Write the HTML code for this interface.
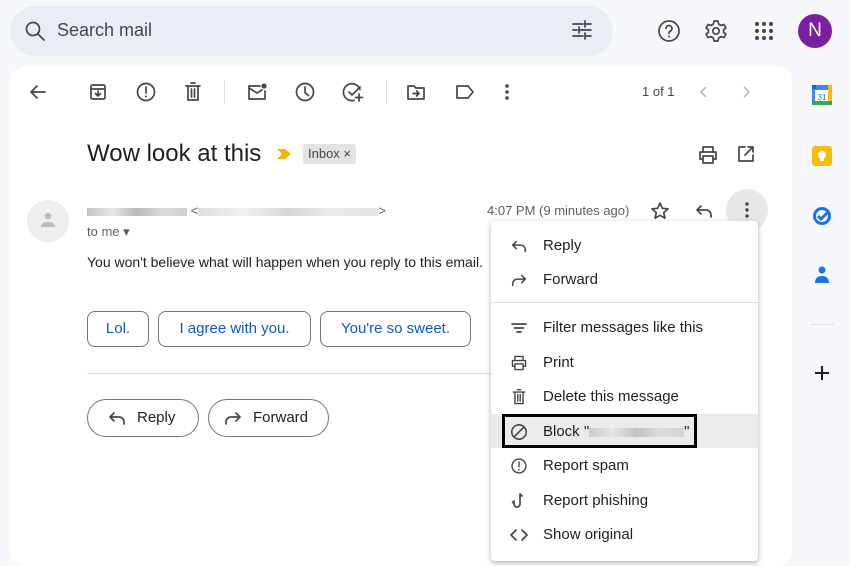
<!DOCTYPE html>
<html><head><style>
*{box-sizing:border-box;margin:0;padding:0}
body{width:850px;height:555px;overflow:hidden;background:#f6f8fc;font-family:"Liberation Sans",Arial,sans-serif;color:#1f1f1f;position:relative}
.abs{position:absolute}
svg{display:block}
.search{left:10px;top:6px;width:603px;height:50px;border-radius:25px;background:#e9eef6}
.card{left:10px;top:66px;width:782px;height:500px;background:#fff;border-radius:16px}
.ic{fill:none;stroke:#444746;stroke-width:1.7;stroke-linecap:round;stroke-linejoin:round}
.btn{position:absolute;height:36px;border:1px solid #747775;border-radius:8px;color:#0b57d0;font-size:15px;line-height:34px;text-align:center}
.pill{position:absolute;height:38px;border:1px solid #747775;border-radius:19px;font-size:15px;line-height:36px;color:#1f1f1f}
.menu{left:491px;top:221px;width:267px;height:340px;background:#fff;box-shadow:0 2px 6px rgba(0,0,0,.3);border-radius:4px}
.mi{position:absolute;left:0;width:267px;height:34px;font-size:15px;line-height:36px;padding-left:52px;color:#1f1f1f}
.mi svg{position:absolute;left:19px;top:9px}
.blur{display:inline-block;height:8px;background:linear-gradient(90deg,#aaa,#ddd,#999,#ccc,#bbb);vertical-align:middle;opacity:.7}
</style></head><body>
<div class="abs search"></div>
<svg class="abs" style="left:24px;top:20px" width="22" height="22" viewBox="0 0 22 22"><circle cx="9" cy="9" r="6.5" class="ic" stroke-width="2.2"/><path d="M14 14l6 6" class="ic" stroke-width="2.4"/></svg>
<div class="abs" style="left:57px;top:20px;font-size:18px;color:#444746">Search mail</div>
<svg class="abs" style="left:571px;top:20px" width="22" height="20" viewBox="0 0 22 20"><path d="M2 4h10M15 4h5M14 1v6M2 10h4M9 10h11M8 7v6M2 16h10M15 16h5M14 13v6" class="ic" stroke-linecap="butt"/></svg>
<svg class="abs" style="left:657px;top:19px" width="24" height="24" viewBox="0 0 24 24"><circle cx="12" cy="12" r="10" class="ic"/><path d="M9 9.5a3 3 0 1 1 4 2.8c-.8.4-1 1-1 2" class="ic"/><circle cx="12" cy="17.5" r="1" fill="#444746"/></svg>
<svg class="abs" style="left:704px;top:19px" width="24" height="24" viewBox="0 0 24 24"><circle cx="12" cy="12" r="3.2" class="ic"/><path d="M10 2h4l.6 3 2.4 1.4 2.9-1 2 3.4-2.3 2v2.4l2.3 2-2 3.4-2.9-1L14.6 19l-.6 3h-4l-.6-3L7 17.6l-2.9 1-2-3.4 2.3-2v-2.4l-2.3-2 2-3.4 2.9 1L9.4 5z" class="ic"/></svg>
<svg class="abs" style="left:754px;top:21px" width="20" height="20" viewBox="0 0 20 20" fill="#444746"><circle cx="3" cy="3" r="2"/><circle cx="10" cy="3" r="2"/><circle cx="17" cy="3" r="2"/><circle cx="3" cy="10" r="2"/><circle cx="10" cy="10" r="2"/><circle cx="17" cy="10" r="2"/><circle cx="3" cy="17" r="2"/><circle cx="10" cy="17" r="2"/><circle cx="17" cy="17" r="2"/></svg>
<div class="abs" style="left:798px;top:14px;width:34px;height:34px;border-radius:50%;background:#7b1fa2;color:#fff;font-size:19px;text-align:center;line-height:34px">N</div>

<div class="abs card"></div>
<svg class="abs" style="left:28px;top:82px" width="20" height="20" viewBox="0 0 20 20"><path d="M17 10H4M9 4l-6 6 6 6" class="ic"/></svg>
<svg class="abs" style="left:88px;top:82px" width="20" height="20" viewBox="0 0 20 20"><rect x="3" y="3" width="14" height="14" rx="1.5" class="ic"/><path d="M3 7h14M10 9v5M7.5 11.5 10 14l2.5-2.5" class="ic"/></svg>
<svg class="abs" style="left:135px;top:81px" width="22" height="22" viewBox="0 0 22 22"><circle cx="11" cy="11" r="8.5" class="ic"/><path d="M11 6v6" class="ic"/><circle cx="11" cy="15.5" r="1" fill="#444746"/></svg>
<svg class="abs" style="left:183px;top:81px" width="20" height="22" viewBox="0 0 20 22"><path d="M3 5h14M8 2h4M5 5v14h10V5M8.5 8v8M11.5 8v8" class="ic"/></svg>
<div class="abs" style="left:224px;top:80px;width:1px;height:24px;background:#e0e0e0"></div>
<svg class="abs" style="left:246px;top:81px" width="22" height="22" viewBox="0 0 22 22"><path d="M14 5H3v13h16V10" class="ic"/><path d="M3 7l8 5 5-3" class="ic"/><circle cx="18" cy="5" r="2.6" fill="#444746"/></svg>
<svg class="abs" style="left:294px;top:81px" width="22" height="22" viewBox="0 0 22 22"><circle cx="11" cy="11" r="8.5" class="ic"/><path d="M11 6v5.5l3.5 3" class="ic"/></svg>
<svg class="abs" style="left:342px;top:81px" width="22" height="22" viewBox="0 0 22 22"><path d="M18 8.5A8.5 8.5 0 1 0 12 19.4" class="ic"/><path d="M7 11l3 3 8-8M17 13v7M13.5 16.5h7" class="ic"/></svg>
<div class="abs" style="left:386px;top:80px;width:1px;height:24px;background:#e0e0e0"></div>
<svg class="abs" style="left:406px;top:82px" width="20" height="20" viewBox="0 0 20 20"><path d="M2 4h6l2 2h8v11H2z" class="ic"/><path d="M7 11.5h6M10.5 9l2.5 2.5-2.5 2.5" class="ic"/></svg>
<svg class="abs" style="left:454px;top:82px" width="22" height="20" viewBox="0 0 22 20"><path d="M3 4h11l5 6-5 6H3z" class="ic"/></svg>
<svg class="abs" style="left:503px;top:82px" width="8" height="20" viewBox="0 0 8 20" fill="#444746"><circle cx="4" cy="4" r="1.8"/><circle cx="4" cy="10" r="1.8"/><circle cx="4" cy="16" r="1.8"/></svg>
<div class="abs" style="left:642px;top:84px;font-size:13px;color:#444746">1 of 1</div>
<svg class="abs" style="left:698px;top:84px" width="12" height="16" viewBox="0 0 12 16"><path d="M8 3L3 8l5 5" style="fill:none;stroke:#b0b0b0;stroke-width:1.4"/></svg>
<svg class="abs" style="left:740px;top:84px" width="12" height="16" viewBox="0 0 12 16"><path d="M4 3l5 5-5 5" style="fill:none;stroke:#b0b0b0;stroke-width:1.4"/></svg>

<div class="abs" style="left:87px;top:140px;font-size:24px;color:#1f1f1f">Wow look at this</div>
<svg class="abs" style="left:276px;top:148px" width="16" height="12" viewBox="0 0 16 12"><path d="M1 1h8l6 5-6 5H1l5-5z" fill="#f4b400"/></svg>
<div class="abs" style="left:303px;top:144px;height:20px;padding:0 5px;background:#e3e3e3;border-radius:3px;font-size:13px;line-height:20px;color:#444746">Inbox ×</div>
<svg class="abs" style="left:697px;top:144px" width="22" height="22" viewBox="0 0 22 22"><path d="M6 8V3h10v5M6 15H3V8h16v7h-3M6 12h10v7H6z" class="ic"/></svg>
<svg class="abs" style="left:736px;top:144px" width="20" height="20" viewBox="0 0 20 20"><path d="M9 3H3v14h14v-6M12 3h5v5M17 3l-8 8" class="ic"/></svg>

<div class="abs" style="left:27px;top:200px;width:42px;height:42px;border-radius:50%;background:#eeeeee"></div>
<svg class="abs" style="left:38px;top:210px" width="20" height="20" viewBox="0 0 20 20" fill="#bdbdbd"><circle cx="10" cy="6" r="3.5"/><path d="M3 17c0-4 3-5 7-5s7 1 7 5z"/></svg>
<div class="abs" style="left:87px;top:203px;font-size:13px;color:#5e5e5e"><span class="blur" style="width:100px"></span> &lt;<span class="blur" style="width:180px;opacity:.4"></span>&gt;</div>
<div class="abs" style="left:87px;top:224px;font-size:13px;color:#5e5e5e">to me ▾</div>
<div class="abs" style="left:487px;top:203px;font-size:13px;color:#5e5e5e">4:07 PM (9 minutes ago)</div>
<svg class="abs" style="left:650px;top:201px" width="20" height="20" viewBox="0 0 20 20"><path d="M10 2l2.3 5.3 5.7.5-4.3 3.8 1.3 5.6L10 14.3 5 17.2l1.3-5.6L2 7.8l5.7-.5z" class="ic" stroke-width="1.6"/></svg>
<svg class="abs" style="left:694px;top:201px" width="20" height="20" viewBox="0 0 20 20"><path d="M7 5L3 9l4 4M3 9h9a5 5 0 0 1 5 5v2" class="ic"/></svg>
<div class="abs" style="left:726px;top:189px;width:42px;height:42px;border-radius:50%;background:#e8e8e8"></div>
<svg class="abs" style="left:743px;top:200px" width="8" height="20" viewBox="0 0 8 20" fill="#444746"><circle cx="4" cy="4" r="1.7"/><circle cx="4" cy="10" r="1.7"/><circle cx="4" cy="16" r="1.7"/></svg>
<div class="abs" style="left:87px;top:254px;font-size:14px;color:#1f1f1f">You won't believe what will happen when you reply to this email.</div>

<div class="btn" style="left:87px;top:311px;width:62px">Lol.</div>
<div class="btn" style="left:158px;top:311px;width:153px">I agree with you.</div>
<div class="btn" style="left:320px;top:311px;width:151px">You're so sweet.</div>
<div class="abs" style="left:87px;top:373px;width:405px;height:1px;background:#e0e0e0"></div>
<div class="pill" style="left:87px;top:399px;width:112px;padding-left:49px">Reply</div>
<svg class="abs" style="left:107px;top:408px" width="20" height="20" viewBox="0 0 20 20"><path d="M7 5L3 9l4 4M3 9h9a5 5 0 0 1 5 5v2" class="ic"/></svg>
<div class="pill" style="left:208px;top:399px;width:121px;padding-left:44px">Forward</div>
<svg class="abs" style="left:223px;top:408px" width="20" height="20" viewBox="0 0 20 20"><path d="M13 5l4 4-4 4M17 9H8a5 5 0 0 0-5 5v2" class="ic"/></svg>

<div class="abs menu">
<div class="mi" style="top:7px"><svg width="18" height="18" viewBox="0 0 20 20"><path d="M7 5L3 9l4 4M3 9h9a5 5 0 0 1 5 5v2" class="ic"/></svg>Reply</div>
<div class="mi" style="top:41px"><svg width="18" height="18" viewBox="0 0 20 20"><path d="M13 5l4 4-4 4M17 9H8a5 5 0 0 0-5 5v2" class="ic"/></svg>Forward</div>
<div style="position:absolute;left:0;top:81px;width:267px;height:1px;background:#e0e0e0"></div>
<div class="mi" style="top:89px"><svg width="18" height="18" viewBox="0 0 18 18"><path d="M2 5h14M4.5 9h9M7 13h4" class="ic"/></svg>Filter messages like this</div>
<div class="mi" style="top:124px"><svg width="18" height="18" viewBox="0 0 22 22"><path d="M6 8V3h10v5M6 15H3V8h16v7h-3M6 12h10v7H6z" class="ic"/></svg>Print</div>
<div class="mi" style="top:158px"><svg width="18" height="18" viewBox="0 0 20 22"><path d="M3 5h14M8 2h4M5 5v14h10V5M8.5 8v8M11.5 8v8" class="ic"/></svg>Delete this message</div>
<div class="mi" style="top:193px;background:#ebebeb"><svg width="18" height="18" viewBox="0 0 20 20"><circle cx="10" cy="10" r="8" class="ic"/><path d="M4.5 15.5l11-11" class="ic"/></svg>Block "<span class="blur" style="width:95px;height:9px;opacity:.5"></span>"</div>
<div style="position:absolute;left:11px;top:193px;width:195px;height:34px;border:3px solid #000"></div>
<div class="mi" style="top:227px"><svg width="18" height="18" viewBox="0 0 22 22"><circle cx="11" cy="11" r="8.5" class="ic"/><path d="M11 6v6" class="ic"/><circle cx="11" cy="15.5" r="1" fill="#444746"/></svg>Report spam</div>
<div class="mi" style="top:262px"><svg width="18" height="18" viewBox="0 0 18 18"><path d="M10 2v10a3 3 0 0 1-6 0v-3l-1.5 1.5M10 2l2 2" class="ic"/></svg>Report phishing</div>
<div class="mi" style="top:296px"><svg width="18" height="18" viewBox="0 0 18 18"><path d="M6 4L1 9l5 5M12 4l5 5-5 5" class="ic"/></svg>Show original</div>
</div>

<svg class="abs" style="left:811px;top:84px" width="22" height="22" viewBox="0 0 22 22"><rect x="1" y="1" width="20" height="20" rx="2" fill="#4285f4"/><rect x="4" y="6" width="14" height="12" fill="#fff"/><rect x="1" y="17" width="20" height="4" fill="#34a853"/><rect x="17" y="1" width="4" height="16" fill="#fbbc04"/><rect x="1" y="1" width="4" height="4" fill="#1967d2"/><text x="11" y="16" font-size="8" text-anchor="middle" fill="#1a73e8" font-family="Liberation Sans">31</text></svg>
<svg class="abs" style="left:811px;top:145px" width="22" height="22" viewBox="0 0 22 22"><rect x="1" y="1" width="20" height="20" rx="3" fill="#fbbc04"/><circle cx="11" cy="10" r="4" fill="#fff"/><rect x="9" y="14" width="4" height="2" fill="#fff"/></svg>
<svg class="abs" style="left:812px;top:206px" width="20" height="20" viewBox="0 0 20 20"><circle cx="10" cy="10" r="7.5" fill="none" stroke="#1a73e8" stroke-width="3"/><path d="M6 10l3 3 7-7" fill="none" stroke="#1a73e8" stroke-width="3"/></svg>
<svg class="abs" style="left:813px;top:265px" width="18" height="20" viewBox="0 0 18 20" fill="#1a73e8"><circle cx="9" cy="5" r="3.5"/><path d="M2 18c0-5 3-7 7-7s7 2 7 7z"/></svg>
<div class="abs" style="left:810px;top:324px;width:24px;height:1px;background:#e0e0e0"></div>
<svg class="abs" style="left:813px;top:364px" width="18" height="18" viewBox="0 0 18 18"><path d="M9 2v14M2 9h14" stroke="#1f1f1f" stroke-width="2"/></svg>
</body></html>
